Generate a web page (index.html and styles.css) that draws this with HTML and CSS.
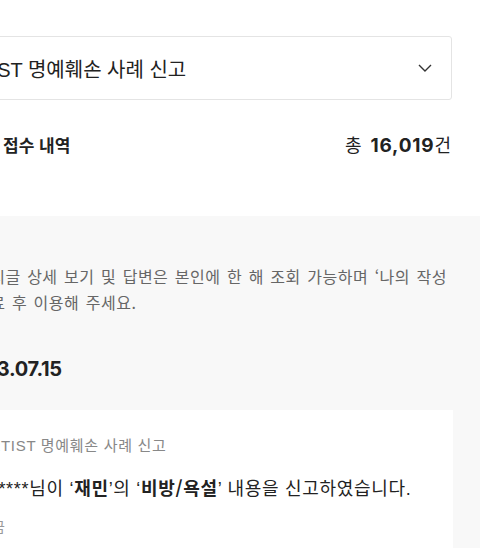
FILE: index.html
```html
<!DOCTYPE html>
<html lang="ko">
<head>
<meta charset="utf-8">
<link rel="stylesheet" href="styles.css">
</head>
<body>
<div class="page">
  <div class="top">
    <div class="select">
      <span class="select-text">ARTIST 명예훼손 사례 신고</span>
      <svg class="chev" width="14" height="8" viewBox="0 0 14 8"><path d="M1 1 L7 7 L13 1" fill="none" stroke="#333" stroke-width="1.4"/></svg>
    </div>
    <div class="summary">
      <span class="summary-title">접수 내역</span>
      <span class="summary-count">총 <b class="num">16,019</b>건</span>
    </div>
  </div>
  <div class="list">
    <p class="notice">게시글 상세 보기 및 답변은 본인에 한 해 조회 가능하며 ‘나의 작성<br>완료 후 이용해 주세요.</p>
    <h2 class="date">2023.07.15</h2>
    <div class="card">
      <div class="card-cat">ARTIST 명예훼손 사례 신고</div>
      <div class="card-text">kk****님이 ‘<b>재민</b>’의 ‘<b>비방/욕설</b>’ 내용을 신고하였습니다.</div>
      <div class="card-meta">방금</div>
    </div>
  </div>
</div>
</body>
</html>
```
FILE: styles.css
```css
html, body {
  margin: 0;
  padding: 0;
  background: #fff;
  overflow: hidden;
}
body {
  font-family: "Liberation Sans", "Noto Sans CJK KR", sans-serif;
  color: #222;
}
.page {
  margin-left: -69px;
}
.top {
  padding: 36px 28px 0 0;
}
.select {
  height: 62px;
  border: 1px solid #e4e4e4;
  border-radius: 3px;
  display: flex;
  align-items: center;
  justify-content: space-between;
  padding: 0 19px 0 20px;
}
.select-text {
  font-size: 20px;
  color: #222;
}
.chev {
  display: block;
}
.summary {
  margin: 28px 0 56px 72px;
  height: 32px;
  display: flex;
  align-items: center;
  justify-content: space-between;
  padding-right: 1px;
}
.summary-title {
  font-family: "Noto Sans CJK KR", sans-serif;
  font-size: 17px;
  font-weight: 700;
}
.summary-count {
  font-family: "Noto Sans CJK KR", sans-serif;
  font-size: 18px;
  color: #222;
}
.num {
  font-family: Inter, "Noto Sans CJK KR", sans-serif;
  font-weight: 700;
  font-size: 19px;
  letter-spacing: 0.8px;
  margin: 0 0 0 4px;
}
.list {
  background: #f8f8f8;
  padding: 47px 27px 40px 28px;
}
.notice {
  margin: 0 0 0 16px;
  font-family: "Noto Sans CJK KR", sans-serif;
  font-size: 16px;
  line-height: 26px;
  color: #666;
  word-spacing: 1.5px;
  letter-spacing: 0.5px;
}
.date {
  margin: 40px 0 0;
  font-family: Inter, sans-serif;
  font-size: 20px;
  line-height: 28px;
  font-weight: 700;
  letter-spacing: -0.3px;
  color: #222;
}
.card {
  margin-top: 27px;
  background: #fff;
  padding: 26px 20px 30px;
}
.card-cat {
  font-size: 15px;
  line-height: 20px;
  letter-spacing: 0.7px;
  color: #888;
}
.card-text {
  margin-top: 18px;
  font-size: 18px;
  line-height: 26px;
  letter-spacing: 0.7px;
  color: #222;
}
.card-text b {
  font-family: "Noto Sans CJK KR", sans-serif;
  font-weight: 700;
}
.card-meta {
  margin-top: 14px;
  font-family: "Noto Sans CJK KR", sans-serif;
  font-size: 14px;
  line-height: 20px;
  color: #999;
}
```
